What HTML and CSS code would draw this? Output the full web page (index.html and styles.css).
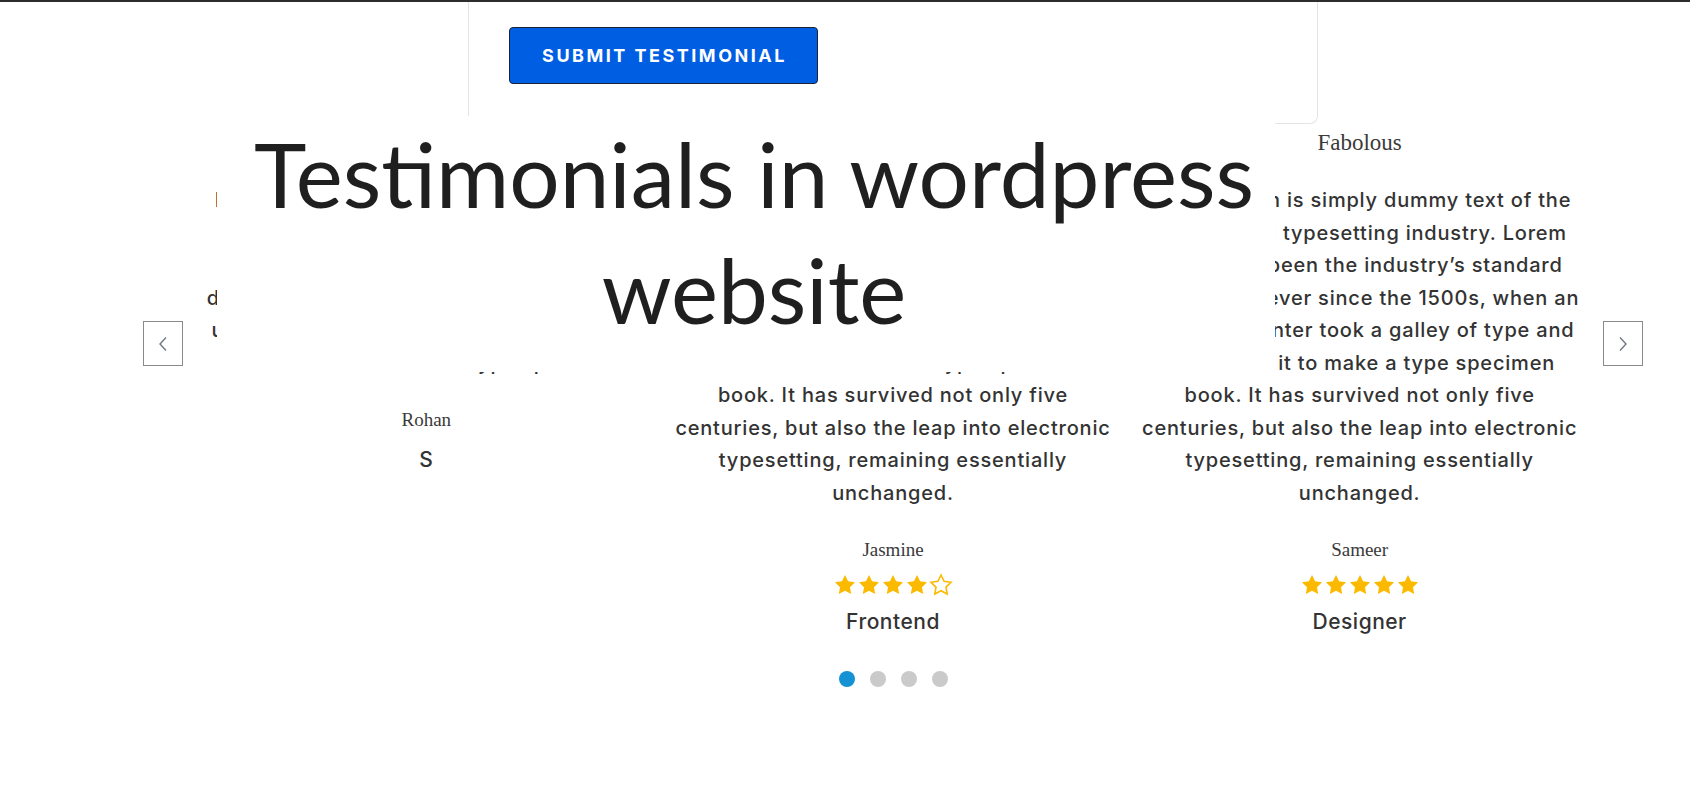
FILE: index.html
```html
<!DOCTYPE html>
<html lang="en">
<head>
<meta charset="utf-8">
<title>Testimonials in wordpress website</title>
<link rel="stylesheet" href="styles.css">
</head>
<body>
<div class="topbar"></div>
<div class="modal">
  <button class="submit">SUBMIT TESTIMONIAL</button>
</div>

<section class="carousel">
  <button class="nav" aria-label="Previous">
    <svg width="10" height="16" viewBox="0 0 10 16"><polyline points="8,1.5 2,8 8,14.5" fill="none" stroke="#707684" stroke-width="1.4"/></svg>
  </button>
  <div class="main">
    <div class="track">
      <article class="slide">
        <h3 class="slide-title">Excellent</h3>
        <p class="slide-text">Lorem Ipsum is simply dummy text of the<br>printing and typesetting industry. Lorem<br>Ipsum has been the industry’s standard<br>dummy text ever since the 1500s, when an<br>unknown printer took a galley of type and<br>scrambled it to make a type specimen</p>
        <h4 class="author">Rohan</h4>
        <div class="role">S</div>
      </article>
      <article class="slide">
        <h3 class="slide-title">Amazing</h3>
        <p class="slide-text">Lorem Ipsum is simply dummy text of the<br>printing and typesetting industry. Lorem<br>Ipsum has been the industry’s standard<br>dummy text ever since the 1500s, when an<br>unknown printer took a galley of type and<br>scrambled it to make a type specimen<br>book. It has survived not only five<br>centuries, but also the leap into electronic<br>typesetting, remaining essentially<br>unchanged.</p>
        <h4 class="author">Jasmine</h4>
        <div class="stars">
          <svg class="star" viewBox="0 0 24 24"><path d="M12 2l3.09 6.26L22 9.27l-5 4.87 1.18 6.88L12 17.77l-6.18 3.25L7 14.14 2 9.27l6.91-1.01L12 2z"/></svg>
          <svg class="star" viewBox="0 0 24 24"><path d="M12 2l3.09 6.26L22 9.27l-5 4.87 1.18 6.88L12 17.77l-6.18 3.25L7 14.14 2 9.27l6.91-1.01L12 2z"/></svg>
          <svg class="star" viewBox="0 0 24 24"><path d="M12 2l3.09 6.26L22 9.27l-5 4.87 1.18 6.88L12 17.77l-6.18 3.25L7 14.14 2 9.27l6.91-1.01L12 2z"/></svg>
          <svg class="star" viewBox="0 0 24 24"><path d="M12 2l3.09 6.26L22 9.27l-5 4.87 1.18 6.88L12 17.77l-6.18 3.25L7 14.14 2 9.27l6.91-1.01L12 2z"/></svg>
          <svg class="star empty" viewBox="0 0 24 24"><path d="M12 2l3.09 6.26L22 9.27l-5 4.87 1.18 6.88L12 17.77l-6.18 3.25L7 14.14 2 9.27l6.91-1.01L12 2z"/></svg>
        </div>
        <div class="role">Frontend</div>
      </article>
      <article class="slide">
        <h3 class="slide-title">Fabolous</h3>
        <p class="slide-text">Lorem Ipsum is simply dummy text of the<br>printing and typesetting industry. Lorem<br>Ipsum has been the industry’s standard<br>dummy text ever since the 1500s, when an<br>unknown printer took a galley of type and<br>scrambled it to make a type specimen<br>book. It has survived not only five<br>centuries, but also the leap into electronic<br>typesetting, remaining essentially<br>unchanged.</p>
        <h4 class="author">Sameer</h4>
        <div class="stars">
          <svg class="star" viewBox="0 0 24 24"><path d="M12 2l3.09 6.26L22 9.27l-5 4.87 1.18 6.88L12 17.77l-6.18 3.25L7 14.14 2 9.27l6.91-1.01L12 2z"/></svg>
          <svg class="star" viewBox="0 0 24 24"><path d="M12 2l3.09 6.26L22 9.27l-5 4.87 1.18 6.88L12 17.77l-6.18 3.25L7 14.14 2 9.27l6.91-1.01L12 2z"/></svg>
          <svg class="star" viewBox="0 0 24 24"><path d="M12 2l3.09 6.26L22 9.27l-5 4.87 1.18 6.88L12 17.77l-6.18 3.25L7 14.14 2 9.27l6.91-1.01L12 2z"/></svg>
          <svg class="star" viewBox="0 0 24 24"><path d="M12 2l3.09 6.26L22 9.27l-5 4.87 1.18 6.88L12 17.77l-6.18 3.25L7 14.14 2 9.27l6.91-1.01L12 2z"/></svg>
          <svg class="star" viewBox="0 0 24 24"><path d="M12 2l3.09 6.26L22 9.27l-5 4.87 1.18 6.88L12 17.77l-6.18 3.25L7 14.14 2 9.27l6.91-1.01L12 2z"/></svg>
        </div>
        <div class="role">Designer</div>
      </article>
    </div>
    <div class="dots">
      <span class="dot active"></span>
      <span class="dot"></span>
      <span class="dot"></span>
      <span class="dot"></span>
    </div>
  </div>
  <button class="nav" aria-label="Next">
    <svg width="10" height="16" viewBox="0 0 10 16"><polyline points="2,1.5 8,8 2,14.5" fill="none" stroke="#707684" stroke-width="1.4"/></svg>
  </button>
</section>

<div class="featured-title">Testimonials in wordpress<br>website</div>
</body>
</html>
```

FILE: styles.css
```css
body {
  margin: 0;
  background: #fff;
  color: #333;
  font-family: Inter, "Noto Sans", sans-serif;
}

.topbar {
  height: 2px;
  background: #2d2d2d;
}

.modal {
  box-sizing: border-box;
  margin-left: 468px;
  width: 850px;
  height: 122px;
  padding: 25px 0 0 40px;
  border: 1px solid #e4e4e4;
  border-top: 0;
  border-radius: 0 0 8px 0;
}

.submit {
  box-sizing: border-box;
  width: 309px;
  height: 57px;
  padding: 0 0 0 2px;
  background: #005ee2;
  color: #fff;
  border: 1px solid #1c2233;
  border-radius: 4px;
  font-family: Inter, "Noto Sans", sans-serif;
  font-weight: 700;
  font-size: 18px;
  letter-spacing: 2.5px;
}

.carousel {
  display: flex;
  gap: 10px;
  width: 1500px;
  margin: 4px 0 0 143px;
}

.nav {
  box-sizing: border-box;
  flex: 0 0 40px;
  height: 45px;
  margin-top: 193px;
  padding: 0;
  display: flex;
  align-items: center;
  justify-content: center;
  background: #fff;
  border: 1px solid #8a8a8a;
}

.main {
  flex: 1;
}

.track {
  display: grid;
  grid-template-columns: repeat(3, 1fr);
}

.slide {
  text-align: center;
  white-space: nowrap;
}

.slide-title {
  margin: 0;
  font-family: "Liberation Serif", serif;
  font-weight: 400;
  font-size: 23px;
  line-height: 30px;
  color: #3a3a3a;
}

.slide-text {
  margin: 26px 0 0;
  font-weight: 500;
  font-size: 20px;
  letter-spacing: 0.8px;
  line-height: 32.5px;
  color: #333;
}

.author {
  margin: 26px 0 0;
  font-family: "Liberation Serif", serif;
  font-weight: 400;
  font-size: 19px;
  line-height: 30px;
  color: #3a3a3a;
}

.stars {
  display: flex;
  justify-content: center;
  height: 24px;
  margin-top: 8px;
}

.star {
  width: 24px;
  height: 24px;
  fill: #fbb900;
}

.star.empty {
  fill: none;
  stroke: #fbb900;
  stroke-width: 1.6;
}

.role {
  margin-top: 11px;
  font-weight: 500;
  font-size: 21px;
  letter-spacing: 0.5px;
  line-height: 28px;
  color: #333;
}

.dots {
  display: flex;
  justify-content: center;
  gap: 15px;
  margin-top: 35px;
}

.dot {
  width: 16px;
  height: 16px;
  border-radius: 50%;
  background: #cacaca;
}

.dot.active {
  background: #1592d4;
}

.featured-title {
  position: absolute;
  left: 217px;
  top: 116px;
  box-sizing: border-box;
  width: 1058px;
  height: 256px;
  padding-left: 16px;
  background: #fff;
  text-align: center;
  font-family: Lato, "Liberation Sans", sans-serif;
  font-weight: 400;
  font-size: 89px;
  line-height: 116px;
  color: #1f1f1f;
}
```
